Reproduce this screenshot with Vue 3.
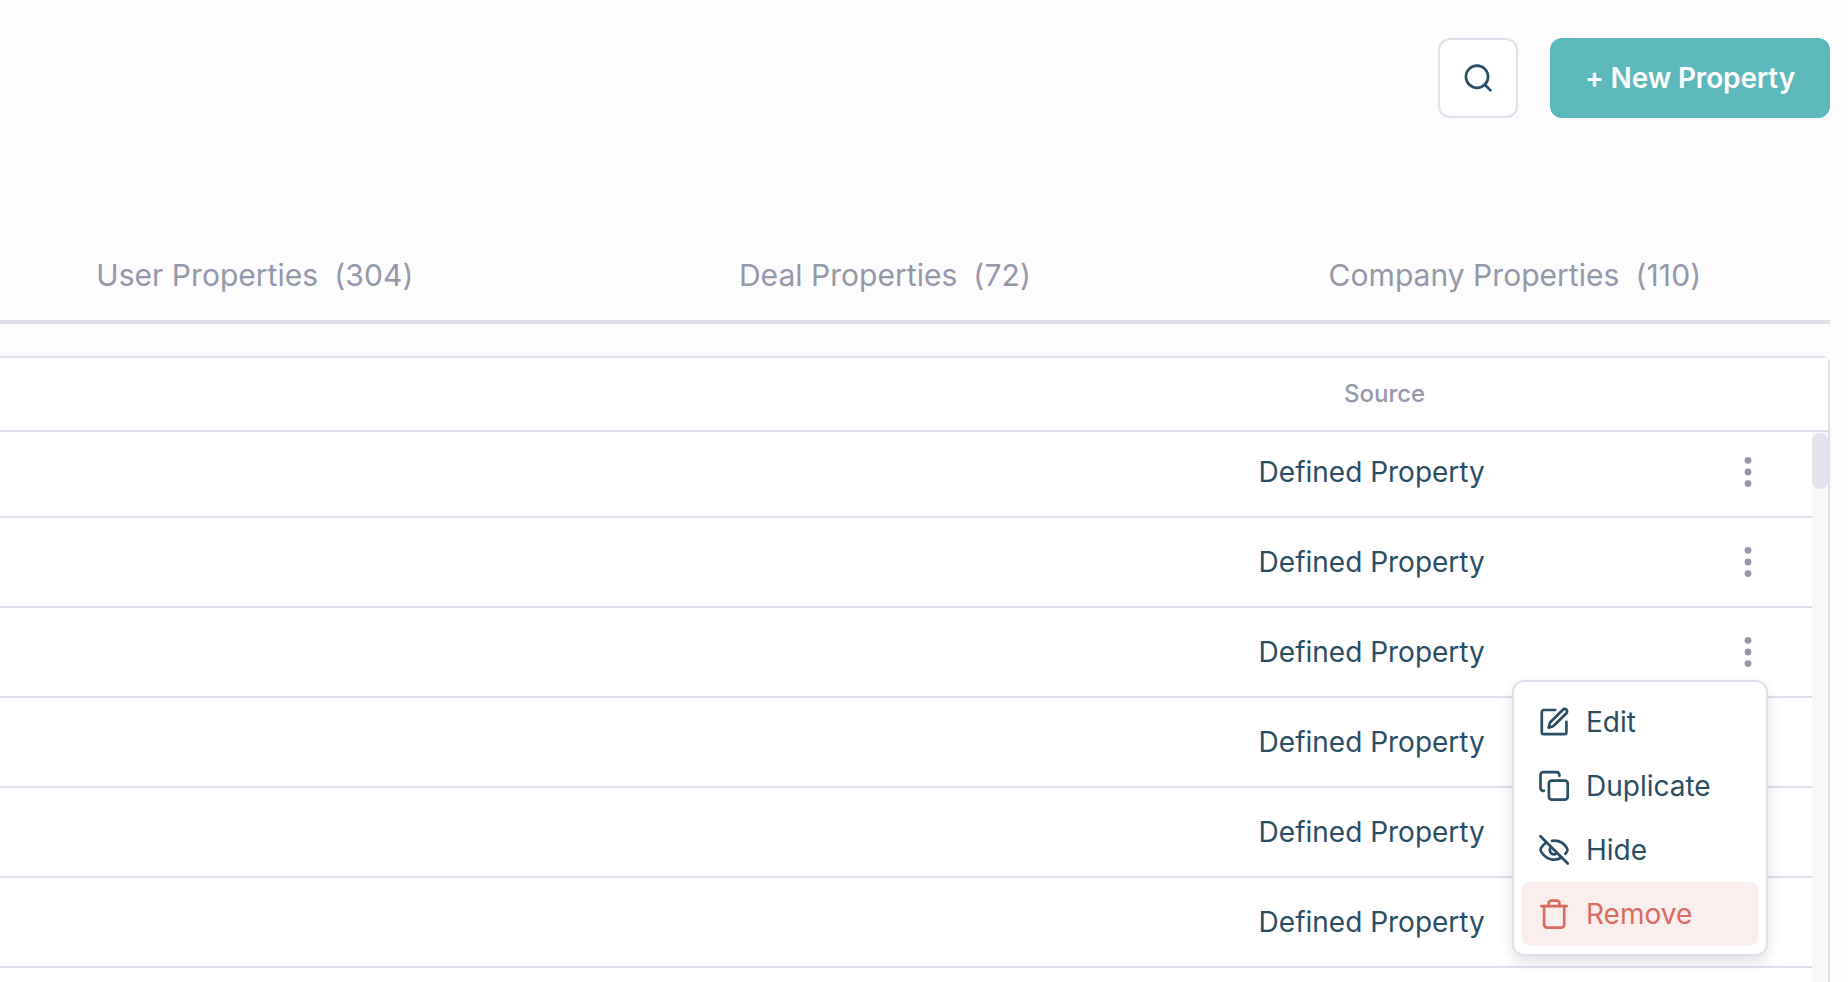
<script setup>
const tabs = [
  { label: 'User Properties', count: 304 },
  { label: 'Deal Properties', count: 72 },
  { label: 'Company Properties', count: 110 },
]
const rows = Array.from({ length: 6 }, (_, id) => ({ id, source: 'Defined Property' }))
</script>

<template>
  <div class="page">
    <header class="toolbar">
      <button class="search" aria-label="Search">
        <svg class="icon" viewBox="0 0 32 32">
          <circle cx="15" cy="14.7" r="11.1" />
          <path d="M22.9 22.7 28.5 28.4" />
        </svg>
      </button>
      <button class="new">+ New Property</button>
    </header>

    <nav class="tabs">
      <a v-for="t in tabs" :key="t.label" class="tab">
        <span class="label">{{ t.label }}</span><span class="count">({{ t.count }})</span>
      </a>
    </nav>

    <section class="table">
      <div class="head"><span class="source-head">Source</span></div>
      <div class="body">
        <div class="rows">
          <div v-for="r in rows" :key="r.id" class="row">
            <span class="source">{{ r.source }}</span>
            <div class="more">
              <svg class="dots" viewBox="0 0 8 32">
                <circle cx="4" cy="4.3" r="3.4" />
                <circle cx="4" cy="16" r="3.4" />
                <circle cx="4" cy="27.6" r="3.4" />
              </svg>
              <div v-if="r.id === 2" class="menu">
                <div class="item">
                  <svg class="icon" viewBox="0 0 32 32">
                    <path d="M17.2 4H5.8a2 2 0 0 0-2 2v20.2a2 2 0 0 0 2 2h20.6a2 2 0 0 0 2-2V15.8" />
                    <path d="M10.6 21.6 11.7 17.5Q12 16.6 12.8 15.8L24.9 3.7a2.45 2.45 0 0 1 3.5 3.5L16.3 19.3Q15.5 20.1 14.6 20.5Z" />
                  </svg>
                  <span>Edit</span>
                </div>
                <div class="item">
                  <svg class="icon" viewBox="0 0 32 32">
                    <rect x="10.9" y="10.6" width="18.8" height="19.1" rx="2.8" />
                    <path d="M21.4 5.7V5a2.8 2.8 0 0 0-2.8-2.8H5.3A2.8 2.8 0 0 0 2.5 5v13a2.8 2.8 0 0 0 2.8 2.8h.6" />
                  </svg>
                  <span>Duplicate</span>
                </div>
                <div class="item">
                  <svg class="icon" viewBox="0 0 32 32">
                    <path d="M2.4 2.2 29.8 29.5" />
                    <path d="M14 6.8C20.7 6 26 9.2 29 14.2Q30 16 29 17.6L27.3 19.8" />
                    <path d="M8.3 8.6C5.9 10 4.2 12 3 14.2Q2.1 15.9 3 17.4C8 26 17 27.5 23.8 23.5" />
                    <path d="M12.6 13.2C10.6 16.6 12.8 20.3 16 20.3Q17.8 20.3 19.3 19.2" />
                  </svg>
                  <span>Hide</span>
                </div>
                <div class="item danger">
                  <svg class="icon" viewBox="0 0 32 32">
                    <path d="M3.3 8.1H28.7" />
                    <path d="M6.1 8.1V26.8a2.8 2.8 0 0 0 2.8 2.8H23.4a2.8 2.8 0 0 0 2.8-2.8V8.1" />
                    <path d="M10.6 8.1V5.4a2.8 2.8 0 0 1 2.8-2.8h5.3a2.8 2.8 0 0 1 2.8 2.8v2.7" />
                  </svg>
                  <span>Remove</span>
                </div>
              </div>
            </div>
          </div>
        </div>
        <div class="track"><div class="thumb"></div></div>
      </div>
    </section>
  </div>
</template>

<style>
body {
  background: #fcfcfc;
}
</style>

<style scoped>
.page {
  box-sizing: border-box;
  width: 1848px;
  height: 982px;
  padding: 38px 18px 0 0;
  overflow: hidden;
  background: #fcfcfc;
  color: #2a4d63;
  font-family: Inter, "Liberation Sans", sans-serif;
  font-size: 28px;
  display: flex;
  flex-direction: column;
}
.icon {
  display: block;
  flex: none;
  width: 32px;
  height: 32px;
  fill: none;
  stroke: currentColor;
  stroke-width: 2.67;
  stroke-linecap: round;
  stroke-linejoin: round;
}
.toolbar {
  display: flex;
  justify-content: flex-end;
  gap: 32px;
  height: 80px;
}
.search,
.new {
  box-sizing: border-box;
  margin: 0;
  border-radius: 12px;
  display: flex;
  align-items: center;
  justify-content: center;
  font: inherit;
}
.search {
  width: 80px;
  padding: 0;
  border: 2px solid #e0dfec;
  background: #fff;
  color: #2a4d63;
}
.new {
  width: 280px;
  padding: 0;
  border: 0;
  background: #5cb8ba;
  color: #fff;
  font-weight: 600;
  letter-spacing: -0.15px;
  white-space: nowrap;
}
.tabs {
  flex: none;
  display: grid;
  grid-template-columns: repeat(3, 630px);
  box-sizing: border-box;
  width: 1890px;
  height: 106px;
  margin: 100px 0 0 -60px;
  border-bottom: 4px solid #e0dfec;
  color: #9498a9;
  font-size: 30px;
}
.tab {
  display: flex;
  justify-content: center;
  gap: 16px;
  padding-top: 39px;
  line-height: 36px;
  white-space: nowrap;
}
.label {
  letter-spacing: 0.03px;
}
.count {
  letter-spacing: 0.15px;
}
.table {
  flex: 1;
  margin-top: 32px;
  min-height: 0;
  display: flex;
  flex-direction: column;
  border: 2px solid #e0dfec;
  border-width: 2px 2px 0 0;
  border-top-right-radius: 8px;
}
.head {
  flex: none;
  box-sizing: border-box;
  height: 74px;
  padding: 21px 0 0 1344px;
  border-bottom: 2px solid #e0dfec;
  background: #fff;
  color: #9498a9;
  font-size: 24px;
  font-weight: 500;
  line-height: 30px;
}
.body {
  flex: 1;
  min-height: 0;
  display: flex;
  background: #fff;
}
.rows {
  flex: 1;
  margin-top: -4px;
}
.row {
  box-sizing: border-box;
  height: 90px;
  padding: 0 60px 0 1258.6px;
  border-bottom: 2px solid #e0dfec;
  display: flex;
  align-items: center;
  justify-content: space-between;
}
.more {
  position: relative;
}
.dots {
  display: block;
  width: 8px;
  height: 32px;
  fill: #9498a9;
}
.track {
  flex: none;
  width: 16px;
  padding-top: 1px;
  background: #f8f8fb;
}
.thumb {
  height: 56px;
  border-radius: 8px;
  background: #e6e2ee;
}
.menu {
  position: absolute;
  z-index: 1;
  top: 44px;
  right: -16px;
  box-sizing: border-box;
  width: 256px;
  padding: 8px;
  border: 2px solid #e0dfec;
  border-radius: 12px;
  background: #fff;
  box-shadow: 0 6px 14px rgba(0, 0, 0, 0.12);
}
.item {
  display: flex;
  align-items: center;
  gap: 16px;
  height: 64px;
  padding-left: 16px;
  border-radius: 8px;
}
.danger {
  background: #fbeeee;
  color: #da6b5e;
}
</style>
